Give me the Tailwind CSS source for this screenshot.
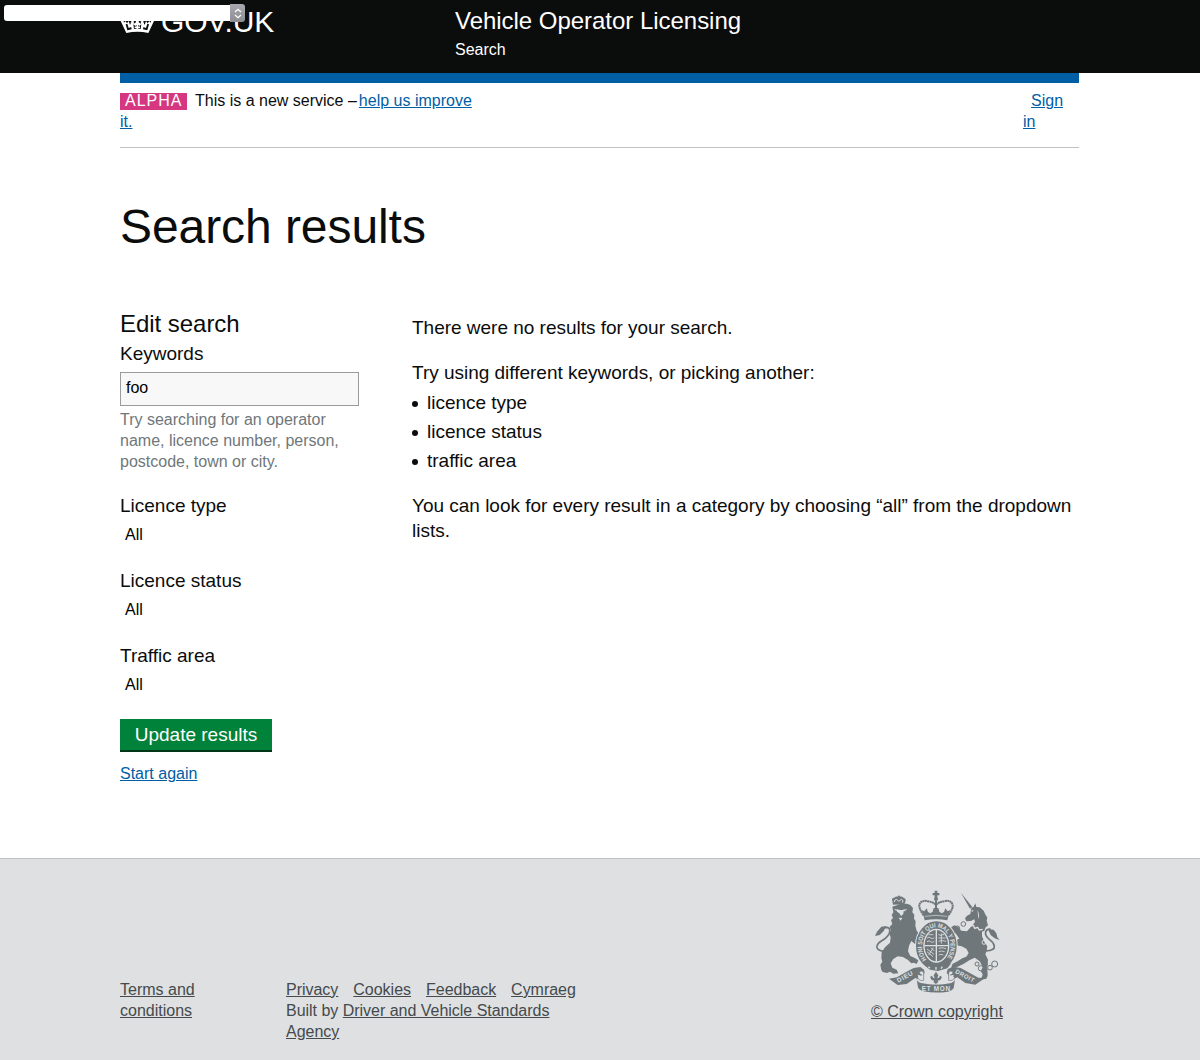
<!DOCTYPE html>
<html lang="en">
<head>
<meta charset="utf-8">
<title>Search results</title>
<script src="https://cdn.jsdelivr.net/npm/@tailwindcss/browser@4"></script>
</head>
<body class="bg-white text-[#0b0c0c] font-['Liberation_Sans',Arial,sans-serif] h-[1060px] overflow-hidden flex flex-col">

<!-- Debug toolbar select -->
<div class="absolute left-1 top-1 z-10 flex h-[18px] w-[241px]">
  <div class="mt-px h-4 w-[226px] rounded-l-[3px] bg-white"></div>
  <div class="flex h-[18px] w-[15px] items-center justify-center rounded-r-[3px] bg-linear-to-b from-[#a9a8ae] to-[#8e8d93]">
    <svg class="h-[11px] w-2" viewBox="0 0 8 11" fill="none" stroke="#fff" stroke-width="1.2"><path d="M1 4 4 1.2 7 4M1 7l3 2.8L7 7"/></svg>
  </div>
</div>

<header class="h-[73px] shrink-0 bg-[#0b0c0c] text-white">
  <div class="flex pl-[120px]">
    <div class="flex w-[335px] pt-1">
      <svg class="mt-px h-[30px] w-[35px]" viewBox="0 0 105 90" fill="#fff">
        <path d="M19 84 2 48l8-2 2 7 4-5 5 7 5-7 4 11 5-6-2-6 9 2-1 7 7-4-1-6h10l-1 6 7 4-1-7 9-2-2 6 5 6 4-11 5 7 5-7 4 5 2-7 8 2-17 36Q53 77 19 84z"/>
        <circle cx="52" cy="24" r="8"/><circle cx="8" cy="38" r="6"/><circle cx="96" cy="38" r="6"/>
        <path d="M17 58l5-2 4 13 8-3 1 7-13 3zM87 58l-5-2-4 13-8-3-1 7 13 3zM40 58l6 5 6-5 6 5 6-5-2 14H42z" fill="#0b0c0c"/>
        <path d="M52 52v22M44 67h16M34 52l3 16M70 52l-3 16" stroke="#fff" stroke-width="5"/>
      </svg>
      <span class="ml-[6px] text-[30px] leading-[36px] tracking-[-0.15px]">GOV.UK</span>
    </div>
    <div>
      <div class="pt-[6px] text-2xl leading-[30px] tracking-[-0.03px]">Vehicle Operator Licensing</div>
      <div class="mt-1 text-base leading-5">Search</div>
    </div>
  </div>
</header>

<main class="mx-[120px] h-[785px] w-[959px] shrink-0">
  <div class="h-[10px] bg-[#005ea5]"></div>
  <div class="flex h-[65px] justify-between border-b border-[#bfc1c3] pt-[7px] text-base leading-[21px]">
    <div class="w-[400px]">
      <div class="flex items-center">
        <span class="mt-[2px] mr-2 h-[17px] w-[67px] bg-[#d53880] pl-[5px] leading-4 tracking-[1px] text-white">ALPHA</span>
        <span class="mr-[2px]">This is a new service –</span><a class="text-[#005ea5] underline">help us improve</a>
      </div>
      <a class="text-[#005ea5] underline">it.</a>
    </div>
    <div class="w-14 text-[#005ea5]"><a class="ml-2 underline">Sign</a><br><a class="underline">in</a></div>
  </div>

  <h1 class="mt-[54px] text-5xl leading-[50px] tracking-[-0.07px]">Search results</h1>

  <div class="mt-[57px] flex">
    <form class="w-[239px]">
      <h2 class="text-2xl leading-[30px] tracking-[-0.04px]">Edit search</h2>
      <label class="mt-[2px] block text-[19px] leading-[25px]">Keywords</label>
      <div class="mt-[6px] h-[34px] border border-[#9a9b9c] bg-[#f8f8f8] px-[5px] text-base leading-[30px] text-black">foo</div>
      <p class="mt-[3px] text-base leading-[21px] text-[#6f777b]">Try searching for an operator name, licence number, person, postcode, town or city.</p>
      <label class="mt-[21px] block text-[19px] leading-[25px]">Licence type</label>
      <div class="mt-[7px] pl-[5px] text-base leading-5 text-black">All</div>
      <label class="mt-[23px] block text-[19px] leading-[25px]">Licence status</label>
      <div class="mt-[7px] pl-[5px] text-base leading-5 text-black">All</div>
      <label class="mt-[23px] block text-[19px] leading-[25px]">Traffic area</label>
      <div class="mt-[7px] pl-[5px] text-base leading-5 text-black">All</div>
      <div class="mt-6 h-[33px] w-[152px] border-b-2 border-[#003618] bg-[#00823b] text-center text-[19px] leading-[31px] text-white">Update results</div>
      <a class="mt-[11px] block text-base leading-[21px] text-[#005ea5] underline">Start again</a>
    </form>
    <section class="ml-[53px] w-[667px] pt-[6px] text-[19px] leading-[25px] tracking-[-0.015px]">
      <p>There were no results for your search.</p>
      <p class="mt-5">Try using different keywords, or picking another:</p>
      <ul class="mt-[5px] space-y-1">
        <li class="flex items-center"><span class="mt-[2px] mr-[9px] size-[6px] rounded-full bg-[#0b0c0c]"></span>licence type</li>
        <li class="flex items-center"><span class="mt-[2px] mr-[9px] size-[6px] rounded-full bg-[#0b0c0c]"></span>licence status</li>
        <li class="flex items-center"><span class="mt-[2px] mr-[9px] size-[6px] rounded-full bg-[#0b0c0c]"></span>traffic area</li>
      </ul>
      <p class="mt-5">You can look for every result in a category by choosing “all” from the dropdown<br>lists.</p>
    </section>
  </div>
</main>

<footer class="flex h-[202px] shrink-0 border-t border-[#bfc1c3] bg-[#dee0e2] pl-[120px] text-base leading-[21px] text-[#454a4c]">
  <div class="w-[166px] pt-[120px]"><a class="underline">Terms and<br>conditions</a></div>
  <div class="w-[585px] pt-[120px] tracking-[-0.02px]">
    <div class="flex gap-[15px]"><a class="underline">Privacy</a><a class="underline">Cookies</a><a class="underline">Feedback</a><a class="underline">Cymraeg</a></div>
    <div>Built by <a class="underline">Driver and Vehicle Standards<br>Agency</a></div>
  </div>
  <div class="w-[134px] pt-[31px]">
    <svg class="ml-[3px] h-[104px] w-[126px]" viewBox="42 30 378 312" fill="#6f777b">
      <!-- lion -->
      <path d="M99 74 97 62q-4-8 6-9 4-4 9-3l5-4 5 4q6-2 9 4 9 2 5 11l-4 11q-17-4-33-2z"/>
      <path d="M103 66q1-9 7-8l6 6 8-6q7 1 4 10" fill="none" stroke="#dee0e2" stroke-width="3"/>
      <path d="M97 80 100 97l-5 8 4 9-6 6 4 12-8 8 4 12-6 6 5 14-2 16-15 14-10 15-1 17 3 11-6 9 3 16 4 6 13 3 9-4 10 6 15-1-5-11-13-6-5-13 8-13 13-8 16 2 15 9 10 10 8-2 8 4 5-11-12-8-12-5-7-14 3-17 7-14 11 9 12 4 6-12-4-8 3-9-12-15-4-15 1-13-5-8 1-12-6-7 2-13-8-9-10-4-18 0z"/>
      <path d="m110 87 9 3h8l9-3-5 7-1 8-7 6-5-8-7-5zM116 113l6 9 5-8zM122 140l-4 30M136 140l5 34" fill="#dee0e2"/>
      <path d="m104 88 10 5M140 88l-8 5" fill="none" stroke="#dee0e2" stroke-width="3"/>
      <path d="M70 214q-22-4-19-16 2-9 14-16 16-8 23-22 5-16-7-18-13 0-20 14" fill="none" stroke="#6f777b" stroke-width="5"/>
      <path d="m45 168 6-13 13-15 15-2-8 15-12 12z"/>
      <!-- unicorn -->
      <path d="m303 39 34 42-7 5z"/>
      <path d="m334 84 7-4 5-10 3 11 10 1 12 10 4 9 7 12-2 9 4 14-7 6-4 10-7 3 0 14 7 17 9 13-2 14-4 10 8 16-2 21 1 27-4 9-17 3 6-15-5-11 5-12-9-17-15-11-16 8-18 11-23 11-13-3 4-9 16-8 13-8 12-5 7-11-7-13-14-7-17-3-6-9 7-7 9-4-10-15-12-6-5-12 12-7 11 4 10 12 17 2 12-14 12-14-2-8-10 5-14 1-4-9 6-8 10-5z"/>
      <path d="m333 92 8-2-4 6zM352 90q8 14 4 28" fill="#dee0e2"/>
      <path d="m315 128 12 2 4 8 9-2 4 9 9-3 5 8 10-2" fill="none" stroke="#dee0e2" stroke-width="4"/>
      <path d="M377 213q28-1 26-15-2-11-15-20-14-12-11-23 4-9 15-7" fill="none" stroke="#6f777b" stroke-width="5"/>
      <path d="m384 148 17 1 8 11 3 12 7 8-15-5-12-10z"/>
      <g fill="none" stroke="#6f777b" stroke-width="3"><circle cx="310" cy="132" r="7"/><circle cx="292" cy="145" r="7"/><circle cx="372" cy="187" r="6" stroke="#dee0e2"/><circle cx="351" cy="252" r="6"/><circle cx="363" cy="265" r="8"/><circle cx="376" cy="252" r="6"/><circle cx="390" cy="263" r="7"/><circle cx="404" cy="252" r="9"/></g>
      <!-- royal crown -->
      <path d="M224 32h8v7h6v7h-6v7h-8v-7h-6v-7h6z"/><circle cx="228" cy="57" r="6"/>
      <path d="M191 106q-17-24-12-34 6-13 25-8 15 2 21 8h6q6-6 21-8 19-5 25 8 5 10-12 34" fill="none" stroke="#6f777b" stroke-width="6" stroke-dasharray="6 1"/>
      <path d="M228 62v30" fill="none" stroke="#6f777b" stroke-width="6"/>
      <path d="m190 104-5-14 8 4 7-9 4 11 7 4 7-5 3-11h14l3 11 7 5 7-4 4-11 7 9 8-4-5 14-4 17q-34-7-68 0z"/>
      <path d="M195 109q33-6 66 0" fill="none" stroke="#dee0e2" stroke-width="2"/>
      <!-- garter and shield -->
      <ellipse cx="229" cy="197" rx="64" ry="77" fill="#dee0e2"/>
      <ellipse cx="229" cy="197" rx="50" ry="62" fill="none" stroke="#6f777b" stroke-width="22"/>
      <path id="garter" d="M200 238A43 55 0 1 1 258 238" fill="none"/>
      <text fill="#dee0e2" font-family="Liberation Sans" font-size="19" font-weight="700"><textPath href="#garter" textLength="236" lengthAdjust="spacingAndGlyphs">HONI SOIT QUI MAL Y PENSE</textPath></text>
      <ellipse cx="229" cy="197" rx="38" ry="50" fill="#dee0e2"/>
      <ellipse cx="229" cy="197" rx="35" ry="47"/>
      <path d="M229 150v94M194 197h70" stroke="#dee0e2" stroke-width="4"/>
      <path d="M201 174q7-5 11 0t11-1M201 185q7-5 11 0t11-1M205 164h15M201 207l21 16M201 215l18 15M213 203l10 10M220 203l-14 22M235 164q7 5 17-1M235 174h22M236 184q8-5 22 0M236 205q10-4 22 1M236 215q8-4 18 0M236 225q6-4 14 0M244 160v31" fill="none" stroke="#dee0e2" stroke-width="2.5"/>
      <path d="m184 247 22 10 21 5 26-3 22-11-13 17-28 8-24-4z"/>
      <path d="m205 260 5 4M228 261v8M247 260l-4 6" stroke="#dee0e2" stroke-width="4"/>
      <!-- motto ribbon -->
      <path d="m87 296 24-4 22-13 28-15 20-3 11 8 2 9-7 10-14-4 3 14-10-4-26 18-27 3z"/>
      <path d="m375 294-20-1-27-15-26-14-25-4-14 8-3 10 7 10 14-4-2 14 13-6 24 17 30 5z"/>
      <path d="M169 292q0 14 14 17 45 10 91 0 12-4 12-17l-5 33q-4 7-17 10-37 6-74-1-14-4-16-12z"/>
      <path d="M173 293q5 11 18 8V277q-7-8-13 0 1 9 9 8M284 293q-5 11-18 8V277q7-8 13 0-1 9-9 8" fill="#dee0e2" stroke="#6f777b" stroke-width="2"/>
      <path d="m228 275 7 11-3 9 5-2 3-6 6 4-5 9-8 2 2 5-5 2-2 6-3-6-5-2 3-5-8-2-5-9 6-4 3 6 5 2-3-9z"/>
      <g fill="#dee0e2" font-family="Liberation Sans" font-weight="700" font-size="19">
        <text transform="translate(115 308) rotate(-28)" textLength="51">DIEU</text>
        <text transform="translate(284 278) rotate(28)" font-size="18" textLength="62">DROIT</text>
        <text x="185" y="332" textLength="85">ET MON</text>
      </g>
    </svg>
    <a class="mt-[7px] block underline">© Crown copyright</a>
  </div>
</footer>
</body>
</html>
